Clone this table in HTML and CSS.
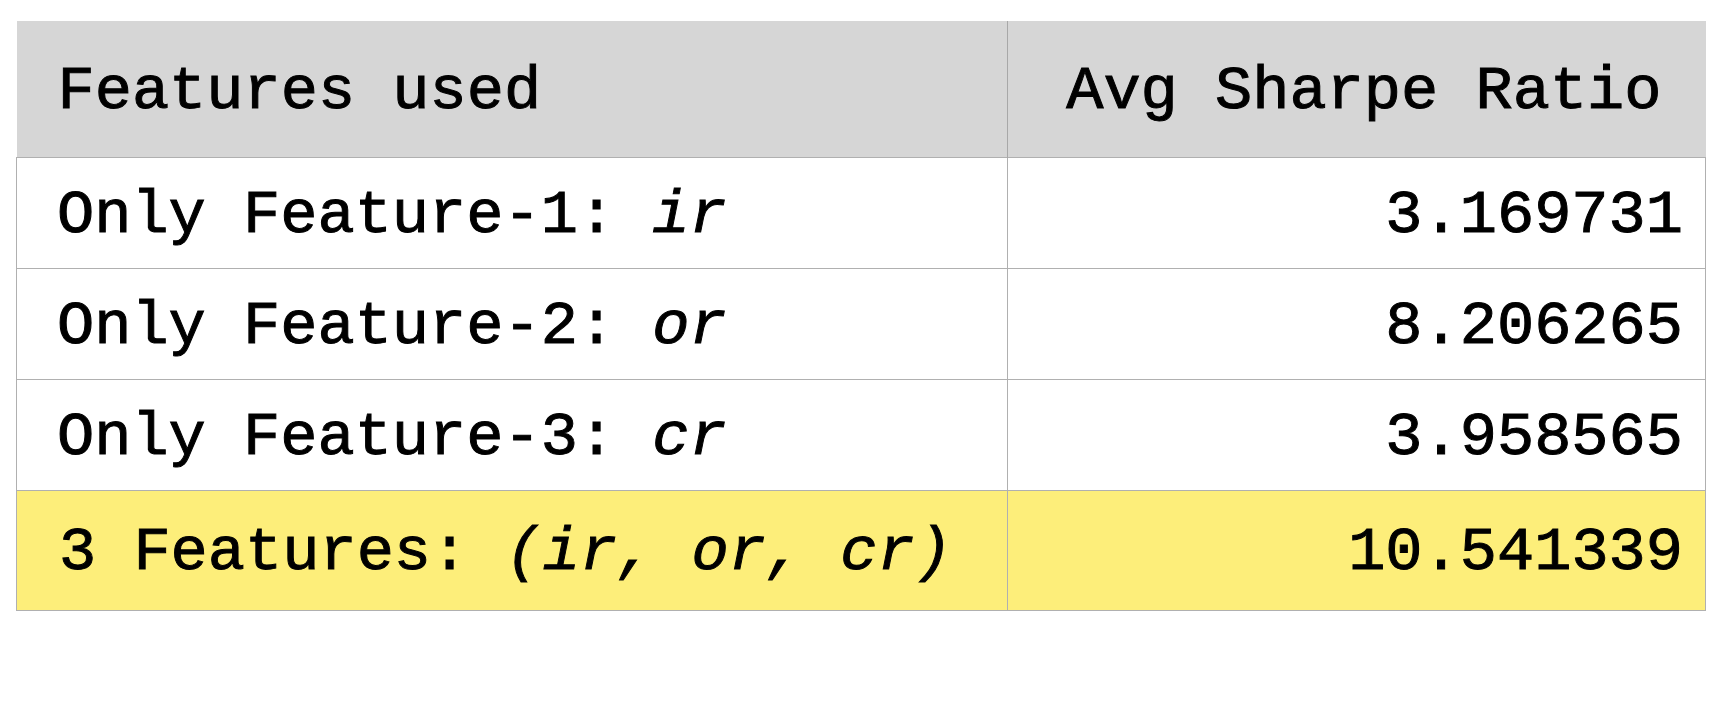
FILE: index.html
```html
<!DOCTYPE html>
<html>
<head>
<meta charset="utf-8">
<link rel="stylesheet" href="styles.css">
</head>
<body>
<table class="results">
  <thead>
    <tr class="head-row">
      <th class="col-feat">Features used</th>
      <th class="col-val">Avg Sharpe Ratio</th>
    </tr>
  </thead>
  <tbody>
    <tr class="row">
      <td class="col-feat">Only Feature-1: <i>ir</i></td>
      <td class="col-val">3.169731</td>
    </tr>
    <tr class="row">
      <td class="col-feat">Only Feature-2: <i>or</i></td>
      <td class="col-val">8.206265</td>
    </tr>
    <tr class="row">
      <td class="col-feat">Only Feature-3: <i>cr</i></td>
      <td class="col-val">3.958565</td>
    </tr>
    <tr class="row row-best">
      <td class="col-feat">3 Features: <i>(ir, or, cr)</i></td>
      <td class="col-val">10.541339</td>
    </tr>
  </tbody>
</table>
</body>
</html>
```

FILE: styles.css
```css
html, body {
  margin: 0;
  padding: 0;
  background: #ffffff;
}

body {
  padding: 21px 16px 0 16px;
}

.results {
  width: 1690px;
  border-collapse: collapse;
  table-layout: fixed;
  font-family: "Liberation Mono", "Courier New", monospace;
  font-size: 62px;
  color: #000;
  -webkit-text-stroke: 1px #000;
}

.results th,
.results td {
  box-sizing: border-box;
  padding: 6px 0 0 0;
  line-height: 1;
  white-space: nowrap;
  vertical-align: middle;
}

.results th {
  font-weight: normal;
  background: #d6d6d6;
  height: 136px;
  text-align: left;
}

.col-feat {
  width: 991px;
}

.head-row th.col-feat {
  padding-left: 41px;
}

.head-row th.col-val {
  text-align: right;
  padding-right: 44px;
  border-left: 1px solid #a8a8a8;
}

.row td {
  border: 1px solid #b0b0b0;
  height: 111px;
  background: #ffffff;
}

.row td.col-feat {
  padding-left: 40px;
}

.row td.col-val {
  text-align: right;
  padding-right: 22px;
}

.row-best td {
  background: #fdee7a;
  height: 120px;
}

.row-best td.col-feat {
  padding-left: 42px;
}

.results i {
  font-style: italic;
}
```
